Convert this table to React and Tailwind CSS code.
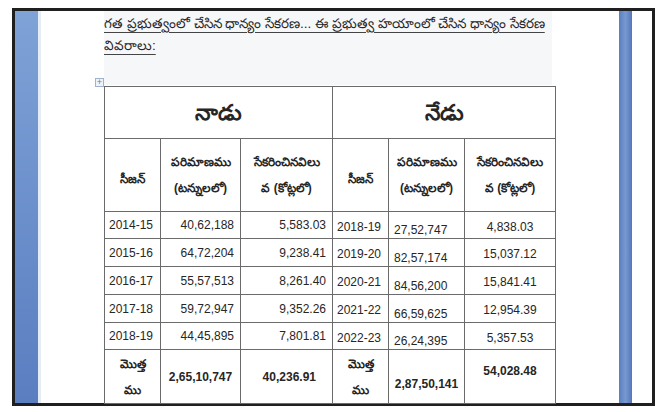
const leftRows = [
  ["2014-15", "40,62,188", "5,583.03"],
  ["2015-16", "64,72,204", "9,238.41"],
  ["2016-17", "55,57,513", "8,261.40"],
  ["2017-18", "59,72,947", "9,352.26"],
  ["2018-19", "44,45,895", "7,801.81"],
];

const rightRows = [
  ["2018-19", "27,52,747", "4,838.03"],
  ["2019-20", "82,57,174", "15,037.12"],
  ["2020-21", "84,56,200", "15,841.41"],
  ["2021-22", "66,59,625", "12,954.39"],
  ["2022-23", "26,24,395", "5,357.53"],
];

const rowHeights = ["h-[27px]", "h-[28px]", "h-[28px]", "h-[28px]", "h-[27px]"];

const cell = "border border-[#6b6b6b]";

function HeadCell({ lines }) {
  return (
    <td className={cell}>
      <div className="h-[72px] flex flex-col items-center justify-center gap-[6px] text-[12px] font-bold leading-[20px]">
        {lines.length === 1 ? (
          <span className="mt-[7px]">{lines[0]}</span>
        ) : (
          lines.map((line) => <span key={line}>{line}</span>)
        )}
      </div>
    </td>
  );
}

function TotalLabel() {
  return (
    <td className={cell}>
      <div className="h-[53px] flex flex-col items-center justify-center gap-[6px] font-bold leading-[20px]">
        <span>మొత్త</span>
        <span>ము</span>
      </div>
    </td>
  );
}

function App() {
  return (
    <div className="w-[665px] h-[412px] bg-white overflow-hidden pt-[8px] pl-[12px] font-['Liberation_Sans','Noto_Sans',sans-serif] text-[#262626]">
      <div className="w-[643px] h-[398px] border-[3px] border-[#1f1f1f] flex">
        <div className="w-[23px] bg-gradient-to-b from-[#7fa2d7] to-[#5a7ec0]" />
        <div className="w-[3px] bg-[#e6ecf5]" />

        <div className="w-[578px] bg-white pl-[63px]">
          <div className="w-[448px] h-[74px] bg-[#f6f7f9] relative">
            <p className="text-[13.5px] leading-[21px] pt-[2px] underline underline-offset-[4px] decoration-[#444] whitespace-nowrap">
              గత ప్రభుత్వంలో చేసిన ధాన్యం సేకరణ... ఈ ప్రభుత్వ హయాంలో చేసిన ధాన్యం సేకరణ
            </p>
            <p className="text-[13.5px] leading-[21px] mt-[1px]">
              <span className="underline underline-offset-[4px] decoration-[#444]">వివరాలు:</span>
            </p>
            <div className="absolute left-[-9px] top-[67px] w-[9px] h-[9px] border border-[#9fb3cf] bg-[#eef3fa] flex items-center justify-center text-[9px] leading-none text-[#5a7fc0]">
              +
            </div>
          </div>

          <table className="mt-[1px] w-[451px] table-fixed border-collapse text-[12px]">
            <colgroup>
              <col className="w-[56px]" />
              <col className="w-[80px]" />
              <col className="w-[92px]" />
              <col className="w-[56px]" />
              <col className="w-[76px]" />
              <col className="w-[91px]" />
            </colgroup>
            <tbody>
              <tr className="h-[52px]">
                <td colSpan={3} className={`${cell} text-center text-[22px] font-bold`}>
                  నాడు
                </td>
                <td colSpan={3} className={`${cell} text-center text-[22px] font-bold`}>
                  నేడు
                </td>
              </tr>
              <tr>
                <HeadCell lines={["సీజన్"]} />
                <HeadCell lines={["పరిమాణము", "(టన్నులలో)"]} />
                <HeadCell lines={["సేకరించినవిలు", "వ (కోట్లలో)"]} />
                <HeadCell lines={["సీజన్"]} />
                <HeadCell lines={["పరిమాణము", "(టన్నులలో)"]} />
                <HeadCell lines={["సేకరించినవిలు", "వ (కోట్లలో)"]} />
              </tr>
              {leftRows.map((row, i) => (
                <tr key={row[0]} className={rowHeights[i]}>
                  <td className={`${cell} pl-[4px]`}>{row[0]}</td>
                  <td className={`${cell} text-right pr-[6px]`}>{row[1]}</td>
                  <td className={`${cell} text-right pr-[6px]`}>{row[2]}</td>
                  <td className={`${cell} pl-[4px] align-top pt-[6px]`}>{rightRows[i][0]}</td>
                  <td className={`${cell} pl-[5px] align-bottom leading-[15px]`}>{rightRows[i][1]}</td>
                  <td className={`${cell} text-center align-top pt-[6px]`}>{rightRows[i][2]}</td>
                </tr>
              ))}
              <tr className="font-bold">
                <TotalLabel />
                <td className={`${cell} text-center`}>2,65,10,747</td>
                <td className={`${cell} text-right pr-[16px]`}>40,236.91</td>
                <TotalLabel />
                <td className={`${cell} text-center align-bottom pb-[10px]`}>2,87,50,141</td>
                <td className={`${cell} text-center align-top pt-[12px]`}>54,028.48</td>
              </tr>
            </tbody>
          </table>
        </div>

        <div className="w-[13px] bg-gradient-to-r from-[#5a7ec0] via-[#7898d0] to-[#5577bb]" />
        <div className="flex-1 bg-white" />
      </div>
    </div>
  );
}

export default App;
